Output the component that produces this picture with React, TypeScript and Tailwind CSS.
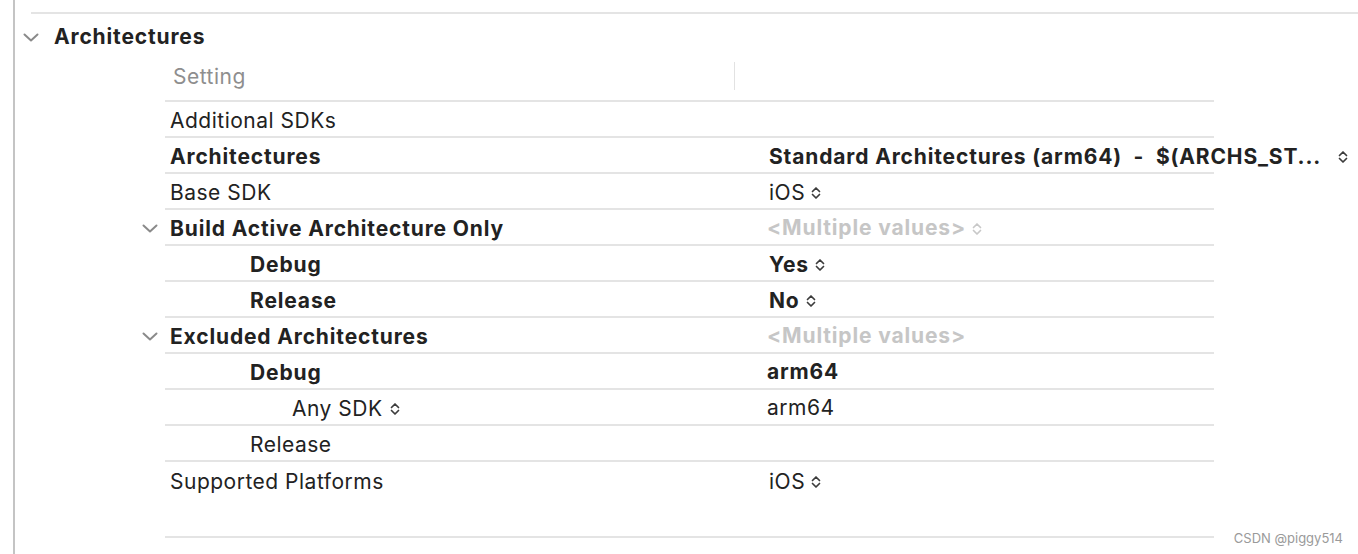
import React from 'react';

interface SettingRow {
  label: string;
  value?: string;
  bold?: boolean;
  valueBold?: boolean;
  muted?: boolean;
  indent?: 0 | 1 | 2;
  chevron?: boolean;
  stepper?: boolean;
  labelStepper?: boolean;
  wide?: boolean;
}

const rows: SettingRow[] = [
  { label: 'Additional SDKs' },
  {
    label: 'Architectures',
    bold: true,
    value: 'Standard Architectures (arm64)  -  $(ARCHS_ST...',
    valueBold: true,
    stepper: true,
    wide: true,
  },
  { label: 'Base SDK', value: 'iOS', stepper: true },
  { label: 'Build Active Architecture Only', bold: true, chevron: true, value: '<Multiple values>', muted: true, stepper: true },
  { label: 'Debug', bold: true, indent: 1, value: 'Yes', valueBold: true, stepper: true },
  { label: 'Release', bold: true, indent: 1, value: 'No', valueBold: true, stepper: true },
  { label: 'Excluded Architectures', bold: true, chevron: true, value: '<Multiple values>', muted: true },
  { label: 'Debug', bold: true, indent: 1, value: 'arm64', valueBold: true },
  { label: 'Any SDK', indent: 2, labelStepper: true, value: 'arm64' },
  { label: 'Release', indent: 1 },
  { label: 'Supported Platforms', value: 'iOS', stepper: true },
];

const Chevron = ({ className }: { className?: string }) => (
  <svg width="16" height="9" viewBox="0 0 16 9" className={className} fill="none">
    <path d="M1.5 1.5 L8 7.5 L14.5 1.5" stroke="#8a8a8a" strokeWidth="2" strokeLinecap="round" strokeLinejoin="round" />
  </svg>
);

// the little up/down popup indicator next to values
const Stepper = ({ muted, className }: { muted?: boolean; className?: string }) => (
  <svg width="10" height="14" viewBox="0 0 10 14" className={className} fill="none">
    <g stroke={muted ? '#c8c8c8' : '#3c3c3c'} strokeWidth="1.7" strokeLinecap="round" strokeLinejoin="round">
      <path d="M1.5 5.5 L5 2 L8.5 5.5" />
      <path d="M1.5 8.5 L5 12 L8.5 8.5" />
    </g>
  </svg>
);

const indentClass = ['pl-[5px]', 'pl-[85px]', 'pl-[127px]'];

const Row = ({ row, last }: { row: SettingRow; last: boolean }) => (
  <div className="flex">
    <div className="flex w-[150px] shrink-0 items-center justify-end pr-[7px]">
      {row.chevron && <Chevron />}
    </div>
    <div
      className={`flex h-[36px] w-[1049px] shrink-0 items-center pt-[3px] ${last ? '' : 'border-b-2 border-[#e4e4e4]'}`}
    >
      <div className={`flex w-[604px] shrink-0 items-center ${indentClass[row.indent ?? 0]}`}>
        <span className={row.bold ? 'font-bold tracking-[0.85px]' : 'font-normal'}>{row.label}</span>
        {row.labelStepper && <Stepper className="ml-[7px]" />}
      </div>
      {row.value && (
        <div className="flex items-center whitespace-pre">
          <span
            className={`${row.muted ? 'text-[#c6c6c6]' : ''} ${
              row.valueBold || row.muted ? 'font-bold tracking-[0.85px]' : 'font-normal'
            } ${row.muted || row.value === 'arm64' ? '-ml-[2px] -mt-[2px]' : ''}`}
          >
            {row.value}
          </span>
          {row.stepper && <Stepper muted={row.muted} className={row.wide ? 'ml-[17px]' : 'ml-[6px]'} />}
        </div>
      )}
    </div>
  </div>
);

export default function App() {
  return (
    <div
      className="relative h-[554px] w-[1358px] overflow-hidden bg-white text-[21px] leading-[24px] tracking-[0.5px] text-[#222222]"
      style={{ fontFamily: 'Inter, "Noto Sans", sans-serif' }}
    >
      <div className="ml-[13px] h-full border-l-2 border-[#c4c4c4] pt-[12px]">
        <div className="ml-[16px] h-[2px] bg-[#e4e4e4]" />

        {/* group header */}
        <div className="flex h-[44px] items-center pl-[8px] pt-[2px]">
          <Chevron />
          <span className="ml-[15px] font-bold tracking-[0.85px]">Architectures</span>
        </div>

        {/* column header */}
        <div className="flex">
          <div className="w-[150px] shrink-0" />
          <div className="flex h-[44px] w-[1049px] shrink-0 items-start border-b-2 border-[#e4e4e4] pt-[7px]">
            <div className="w-[569px] shrink-0 pl-[8px] text-[#8e8e8e]">Setting</div>
            <div className="mt-[-3px] h-[28px] w-px bg-[#e2e2e2]" />
          </div>
        </div>

        {rows.map((row, i) => (
          <Row key={i} row={row} last={i === rows.length - 1} />
        ))}

        <div className="flex pt-[38px]">
          <div className="w-[150px] shrink-0" />
          <div className="h-[2px] w-[1049px] shrink-0 bg-[#e4e4e4]" />
        </div>
      </div>

      <span className="absolute bottom-[8px] right-[15px] text-[13px] leading-[16px] tracking-normal text-[#9a9a9a]">
        CSDN @piggy514
      </span>
    </div>
  );
}
